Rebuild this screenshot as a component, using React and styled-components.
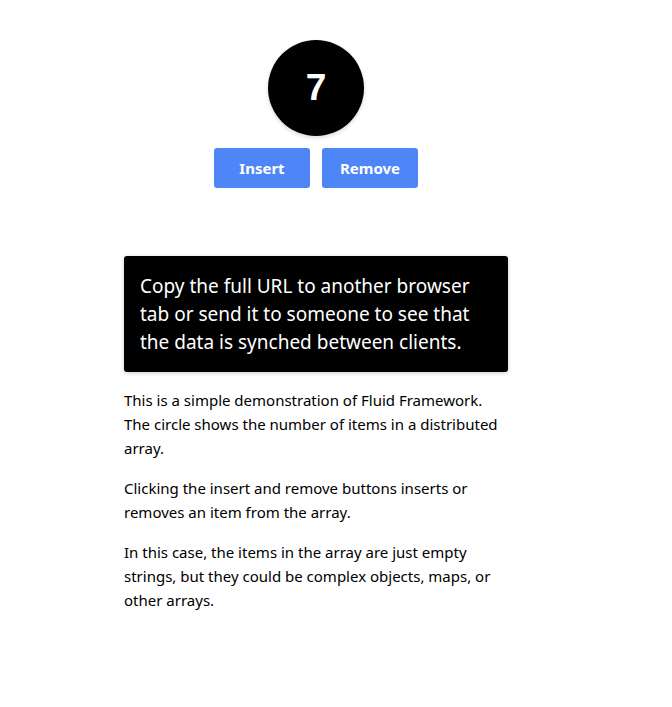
import styled, { createGlobalStyle } from 'styled-components';

const GlobalStyle = createGlobalStyle`
  body {
    margin: 0;
    background: #fff;
    font-family: "Noto Sans", "Open Sans", sans-serif;
    color: #000;
  }
`;

const Page = styled.div`
  width: 632px;
  display: flex;
  flex-direction: column;
  align-items: center;
  padding-top: 40px;
`;

const Counter = styled.div`
  width: 96px;
  height: 96px;
  border-radius: 50%;
  background: #000;
  color: #fff;
  display: flex;
  align-items: center;
  justify-content: center;
  font-family: "Liberation Sans", Arial, sans-serif;
  font-weight: 700;
  font-size: 37px;
  box-shadow: 0 2px 4px rgba(0, 0, 0, 0.15);
`;

const Controls = styled.div`
  display: flex;
  gap: 12px;
  margin-top: 12px;
`;

const Button = styled.button`
  width: 96px;
  height: 40px;
  border: none;
  border-radius: 3px;
  background: #4f86f7;
  color: #fff;
  font-family: inherit;
  font-weight: 700;
  font-size: 15px;
  cursor: pointer;
`;

const Content = styled.div`
  width: 384px;
  margin-top: 68px;
`;

const Notice = styled.div`
  background: #000;
  color: #fff;
  border-radius: 3px;
  padding: 16px;
  font-size: 19px;
  line-height: 28px;
  box-shadow: 0 1px 4px rgba(0, 0, 0, 0.2);
`;

const Text = styled.p`
  margin: 16px 0 0;
  font-size: 15px;
  line-height: 24px;
`;

export default function App() {
  return (
    <>
      <GlobalStyle />
      <Page>
        <Counter>7</Counter>
        <Controls>
          <Button>Insert</Button>
          <Button>Remove</Button>
        </Controls>
        <Content>
          <Notice>
            Copy the full URL to another browser tab or send it to someone to see that the data is
            synched between clients.
          </Notice>
          <Text>
            This is a simple demonstration of Fluid Framework. The circle shows the number of items
            in a distributed array.
          </Text>
          <Text>Clicking the insert and remove buttons inserts or removes an item from the array.</Text>
          <Text>
            In this case, the items in the array are just empty strings, but they could be complex
            objects, maps, or other arrays.
          </Text>
        </Content>
      </Page>
    </>
  );
}
